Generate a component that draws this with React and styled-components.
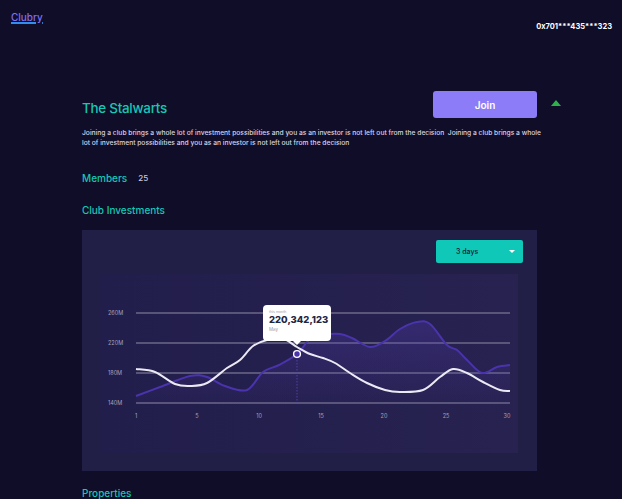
import React from "react";
import styled, { createGlobalStyle } from "styled-components";

const GlobalStyle = createGlobalStyle`
  html, body { margin: 0; padding: 0; }
  body {
    background: #100d28;
    font-family: "Inter", "Noto Sans", sans-serif;
    color: #e6e4f0;
  }
  * { box-sizing: border-box; }
`;

const Page = styled.div`
  width: 622px;
  min-height: 499px;
  overflow: hidden;
`;

const Header = styled.header`
  display: flex;
  justify-content: space-between;
  align-items: flex-start;
  padding: 11px 10px 0 11px;
`;

const Logo = styled.a`
  font-size: 10px;
  line-height: 12px;
  font-weight: 500;
  color: #7f6ff5;
  text-decoration: underline;
  text-decoration-color: #2f8ff0;
  text-decoration-thickness: 1.5px;
  text-underline-offset: 1px;
`;

const Address = styled.div`
  margin-top: 10px;
  font-size: 7.5px;
  line-height: 12px;
  font-weight: 700;
  color: #ffffff;
`;

const Main = styled.main`
  padding-left: 82px;
  width: 542px;
`;

const TitleRow = styled.div`
  display: flex;
  align-items: flex-start;
  width: 479px;
  margin-top: 58px;
`;

const Title = styled.h1`
  flex: 1;
  margin: 0;
  padding-top: 9px;
  font-size: 13.4px;
  line-height: 17px;
  font-weight: 500;
  letter-spacing: -0.25px;
  color: #17c7b5;
`;

const JoinButton = styled.button`
  width: 104px;
  height: 27px;
  border: none;
  border-radius: 3px;
  background: #8c7cf7;
  color: #ffffff;
  font-family: inherit;
  font-size: 10px;
  font-weight: 600;
  cursor: pointer;
`;

const TrendUp = styled.span`
  margin: 9px 0 0 14px;
  width: 0;
  height: 0;
  border-left: 5px solid transparent;
  border-right: 5px solid transparent;
  border-bottom: 6px solid #2eb14a;
`;

const Description = styled.p`
  margin: 10px 0 0;
  width: 460px;
  font-size: 6.7px;
  line-height: 10px;
  font-weight: 500;
  color: #d6d4e4;
`;

const MembersRow = styled.div`
  display: flex;
  align-items: center;
  gap: 11px;
  margin-top: 24px;
`;

const SectionLabel = styled.h2`
  margin: ${(p) => p.$mt || 0}px 0 0;
  font-size: 10px;
  line-height: 12px;
  font-weight: 500;
  color: #17c7b5;
`;

const Count = styled.span`
  font-size: 8px;
  line-height: 12px;
  color: #c9c7d8;
  font-weight: 500;
`;

const Card = styled.section`
  margin-top: 14px;
  width: 455px;
  height: 241px;
  background: #221f46;
  padding: 10px 14px 18px 18px;
`;

const CardTop = styled.div`
  display: flex;
  justify-content: flex-end;
`;

const Select = styled.div`
  width: 87px;
  height: 23px;
  border-radius: 2px;
  background: #10c8b7;
  display: flex;
  align-items: center;
  justify-content: space-between;
  padding: 0 8px 0 20px;
  font-size: 7px;
  font-weight: 500;
  color: #1a1838;
`;

const Caret = styled.span`
  width: 0;
  height: 0;
  border-left: 3px solid transparent;
  border-right: 3px solid transparent;
  border-top: 3.5px solid #ffffff;
`;

const ChartPanel = styled.div`
  position: relative;
  margin: 11px 5px 0 0;
  height: 179px;
  background: #25214f;
`;

const ChartSvg = styled.svg`
  display: block;
  width: 418px;
  height: 179px;
`;

const Tooltip = styled.div`
  position: absolute;
  left: 163px;
  top: 31px;
  width: 68px;
  height: 36px;
  background: #ffffff;
  border-radius: 4px;
  padding: 5px 6px 0;
  display: flex;
  flex-direction: column;
  &::after {
    content: "";
    position: absolute;
    left: 30px;
    bottom: -4px;
    border-left: 4px solid transparent;
    border-right: 4px solid transparent;
    border-top: 4px solid #ffffff;
  }
`;

const TipLabel = styled.span`
  font-size: 3.5px;
  line-height: 4px;
  color: #9a9aa8;
`;

const TipValue = styled.span`
  font-size: 9.5px;
  line-height: 12px;
  font-weight: 800;
  color: #1d2746;
`;

const TipSub = styled.span`
  font-size: 4.5px;
  line-height: 7px;
  color: #9a9aa8;
`;

const whitePts = [
  [136, 369], [155, 372], [175, 384], [190, 386], [207, 383], [227, 368],
  [240, 360], [253, 346], [267, 340], [282, 338], [297, 347], [310, 354],
  [323, 358], [335, 363], [350, 373], [367, 383], [385, 390], [400, 392],
  [423, 390], [440, 377], [453, 369], [467, 373], [483, 382], [500, 390], [510, 391],
];

const purplePts = [
  [136, 396], [160, 387], [190, 376], [207, 377], [225, 386], [247, 390],
  [263, 372], [279, 365], [297, 354], [310, 339], [323, 335], [340, 334],
  [352, 338], [370, 347], [385, 341], [400, 329], [417, 322], [430, 324],
  [447, 345], [457, 350], [467, 360], [482, 373], [497, 367], [510, 365],
];

function smooth(pts) {
  let d = `M${pts[0][0]},${pts[0][1]}`;
  for (let i = 0; i < pts.length - 1; i++) {
    const p0 = pts[i - 1] || pts[i];
    const p1 = pts[i];
    const p2 = pts[i + 1];
    const p3 = pts[i + 2] || p2;
    const c1x = p1[0] + (p2[0] - p0[0]) / 6;
    const c1y = p1[1] + (p2[1] - p0[1]) / 6;
    const c2x = p2[0] - (p3[0] - p1[0]) / 6;
    const c2y = p2[1] - (p3[1] - p1[1]) / 6;
    d += ` C${c1x.toFixed(1)},${c1y.toFixed(1)} ${c2x.toFixed(1)},${c2y.toFixed(1)} ${p2[0]},${p2[1]}`;
  }
  return d;
}

const yTicks = [
  { label: "260M", y: 313 },
  { label: "220M", y: 343 },
  { label: "180M", y: 373 },
  { label: "140M", y: 403 },
];

const xTicks = [
  { label: "1", x: 136 },
  { label: "5", x: 197 },
  { label: "10", x: 259 },
  { label: "15", x: 321 },
  { label: "20", x: 384 },
  { label: "25", x: 446 },
  { label: "30", x: 507 },
];

function Chart() {
  const purple = smooth(purplePts);
  const white = smooth(whitePts);
  const area = `${purple} L510,403 L136,403 Z`;
  return (
    <ChartSvg viewBox="100 274 418 179">
      <defs>
        <linearGradient id="panelBg" x1="0" y1="0" x2="1" y2="0">
          <stop offset="0" stopColor="#221e4b" />
          <stop offset="1" stopColor="#27224f" />
        </linearGradient>
        <linearGradient id="areaFill" x1="0" y1="0" x2="0" y2="1">
          <stop offset="0" stopColor="#5b3fc4" stopOpacity="0.28" />
          <stop offset="1" stopColor="#5b3fc4" stopOpacity="0.04" />
        </linearGradient>
      </defs>
      <rect x="100" y="274" width="418" height="179" fill="url(#panelBg)" />
      {yTicks.map((t) => (
        <g key={t.label}>
          <line x1="136" x2="510" y1={t.y} y2={t.y} stroke="#6b6889" strokeWidth="1.3" />
          <text x="108" y={t.y + 2} fontSize="5.5" fill="#a3a1bb" fontFamily="Inter, sans-serif">
            {t.label}
          </text>
        </g>
      ))}
      {xTicks.map((t) => (
        <text
          key={t.label}
          x={t.x}
          y="418"
          fontSize="5.5"
          fill="#a3a1bb"
          textAnchor="middle"
          fontFamily="Inter, sans-serif"
        >
          {t.label}
        </text>
      ))}
      <path d={area} fill="url(#areaFill)" />
      <line x1="297" x2="297" y1="354" y2="403" stroke="#5a49b0" strokeWidth="0.8" strokeDasharray="1.5 1.5" />
      <path d={purple} fill="none" stroke="#4a33ac" strokeWidth="2" />
      <path d={white} fill="none" stroke="#ebe9f3" strokeWidth="2" />
      <circle cx="297" cy="354" r="3.4" fill="#4a33ac" stroke="#ffffff" strokeWidth="1.4" />
    </ChartSvg>
  );
}

export default function App() {
  return (
    <Page>
      <GlobalStyle />
      <Header>
        <Logo href="#">Clubry</Logo>
        <Address>0x701***435***323</Address>
      </Header>
      <Main>
        <TitleRow>
          <Title>The Stalwarts</Title>
          <JoinButton>Join</JoinButton>
          <TrendUp />
        </TitleRow>
        <Description>
          Joining a club brings a whole lot of investment possibilities and you as an investor is not
          left out from the decision&nbsp; Joining a club brings a whole lot of investment
          possibilities and you as an investor is not left out from the decision
        </Description>
        <MembersRow>
          <SectionLabel>Members</SectionLabel>
          <Count>25</Count>
        </MembersRow>
        <SectionLabel $mt={20}>Club Investments</SectionLabel>
        <Card>
          <CardTop>
            <Select>
              3 days
              <Caret />
            </Select>
          </CardTop>
          <ChartPanel>
            <Chart />
            <Tooltip>
              <TipLabel>this month</TipLabel>
              <TipValue>220,342,123</TipValue>
              <TipSub>May</TipSub>
            </Tooltip>
          </ChartPanel>
        </Card>
        <SectionLabel $mt={16}>Properties</SectionLabel>
      </Main>
    </Page>
  );
}
